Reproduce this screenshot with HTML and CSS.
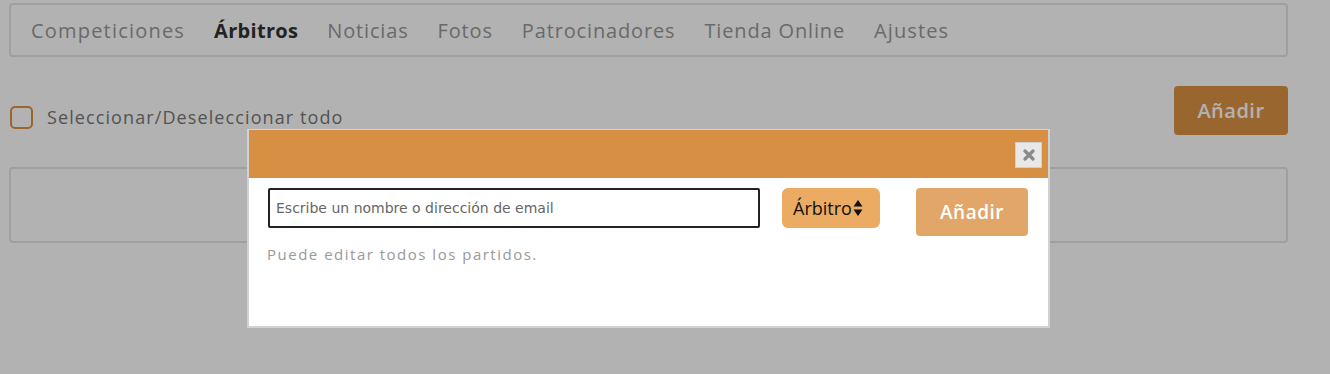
FILE: index.html
```html
<!DOCTYPE html>
<html lang="es">
<head>
<meta charset="utf-8">
<title>Árbitros</title>
<link rel="stylesheet" href="styles.css">
</head>
<body>
<div class="page">
  <nav class="tabs">
    <a class="tab">Competiciones</a>
    <a class="tab active">Árbitros</a>
    <a class="tab">Noticias</a>
    <a class="tab">Fotos</a>
    <a class="tab">Patrocinadores</a>
    <a class="tab">Tienda Online</a>
    <a class="tab last">Ajustes</a>
  </nav>
  <div class="toolbar">
    <label class="selall"><span class="check"></span>Seleccionar/Deseleccionar todo</label>
    <button class="btn-add">Añadir</button>
  </div>
  <div class="listbox"></div>
</div>
<div class="overlay"></div>
<div class="dialog">
  <div class="dialog-head">
    <button class="close" aria-label="Cerrar"><svg width="12" height="12" viewBox="0 0 12 12"><path d="M2 2 L10 10 M10 2 L2 10" stroke="#8a8a8a" stroke-width="3.2" stroke-linecap="round"/></svg></button>
  </div>
  <div class="dialog-body">
    <div class="form-row">
      <input class="search" type="text" placeholder="Escribe un nombre o dirección de email">
      <div class="role">Árbitro<svg class="arrows" width="10" height="18" viewBox="0 0 10 18"><path d="M5 1 L9.5 7.5 H0.5 Z M5 17 L9.5 10.5 H0.5 Z" fill="#111"/></svg></div>
      <button class="btn-dlg">Añadir</button>
    </div>
    <p class="hint">Puede editar todos los partidos.</p>
  </div>
</div>
</body>
</html>
```
FILE: styles.css
```css
html, body { margin: 0; padding: 0; }
body {
  width: 1330px;
  height: 374px;
  background: #ffffff;
  font-family: "Open Sans", "DejaVu Sans", sans-serif;
  overflow: hidden;
  position: relative;
}
.page { padding: 3px 42px 0 9px; }
.tabs {
  height: 50px;
  border: 2px solid #e4e4e4;
  border-radius: 4px;
  display: flex;
  align-items: center;
  gap: 29px;
  padding: 0 0 0 20px;
  box-sizing: content-box;
}
.tab {
  font-size: 20px;
  color: #989898;
  letter-spacing: 0.85px;
}
.tab:first-child { letter-spacing: 1.2px; }
.tab.last { letter-spacing: 1.1px; }
.tab.active { color: #333; font-weight: 700; letter-spacing: 0.3px; }
.toolbar {
  margin-top: 29px;
  height: 50px;
  display: flex;
  justify-content: space-between;
  align-items: flex-start;
}
.selall {
  display: flex;
  align-items: center;
  gap: 14px;
  margin-top: 19px;
  font-size: 18px;
  color: #777;
  letter-spacing: 1.1px;
}
.check {
  width: 19px;
  height: 19px;
  border: 2.5px solid #dc9246;
  border-radius: 5px;
  margin-left: 1px;
}
.btn-add {
  width: 114px;
  height: 49px;
  background: #dc9246;
  color: #fff;
  border: none;
  border-radius: 4px;
  font-family: inherit;
  font-size: 20px;
  font-weight: 600;
  letter-spacing: 0.5px;
}
.listbox {
  margin-top: 31px;
  height: 72px;
  border: 2px solid #e4e4e4;
  border-radius: 4px;
}
.overlay {
  position: absolute;
  inset: 0;
  background: rgba(0, 0, 0, 0.3);
}
.dialog {
  position: absolute;
  left: 247px;
  top: 129px;
  width: 799px;
  height: 196px;
  border: 2px solid #d2d2d2;
  border-top-width: 1px;
  background: #fff;
}
.dialog-head {
  height: 48px;
  background: #d78f44;
  display: flex;
  justify-content: flex-end;
  align-items: flex-start;
  padding: 12px 6px 0 0;
  box-sizing: border-box;
}
.close {
  width: 27px;
  height: 26px;
  background: #e8e8e8;
  border: 1px solid #cfcfcf;
  padding: 0;
  display: flex;
  align-items: center;
  justify-content: center;
}
.dialog-body { padding: 10px 0 0 19px; }
.form-row {
  display: flex;
  align-items: flex-start;
}
.search {
  width: 492px;
  height: 40px;
  box-sizing: border-box;
  border: 2px solid #222;
  border-radius: 2px;
  padding: 0 6px;
  font-family: "DejaVu Sans", sans-serif;
  font-size: 14px;
  color: #333;
}
.search::placeholder { color: #666; }
.role {
  margin-left: 22px;
  width: 98px;
  height: 40px;
  box-sizing: border-box;
  background: #ebab62;
  border-radius: 6px;
  display: flex;
  align-items: center;
  padding-left: 11px;
  font-size: 18px;
  color: #111;
}
.arrows { margin-left: 1px; }
.btn-dlg {
  margin-left: 36px;
  width: 112px;
  height: 48px;
  background: #e2a668;
  color: #fff;
  border: none;
  border-radius: 4px;
  font-family: inherit;
  font-size: 19px;
  font-weight: 600;
  letter-spacing: 0.5px;
}
.hint {
  margin: 8px 0 0 -1px;
  font-size: 15px;
  color: #999;
  letter-spacing: 1.5px;
}
```
